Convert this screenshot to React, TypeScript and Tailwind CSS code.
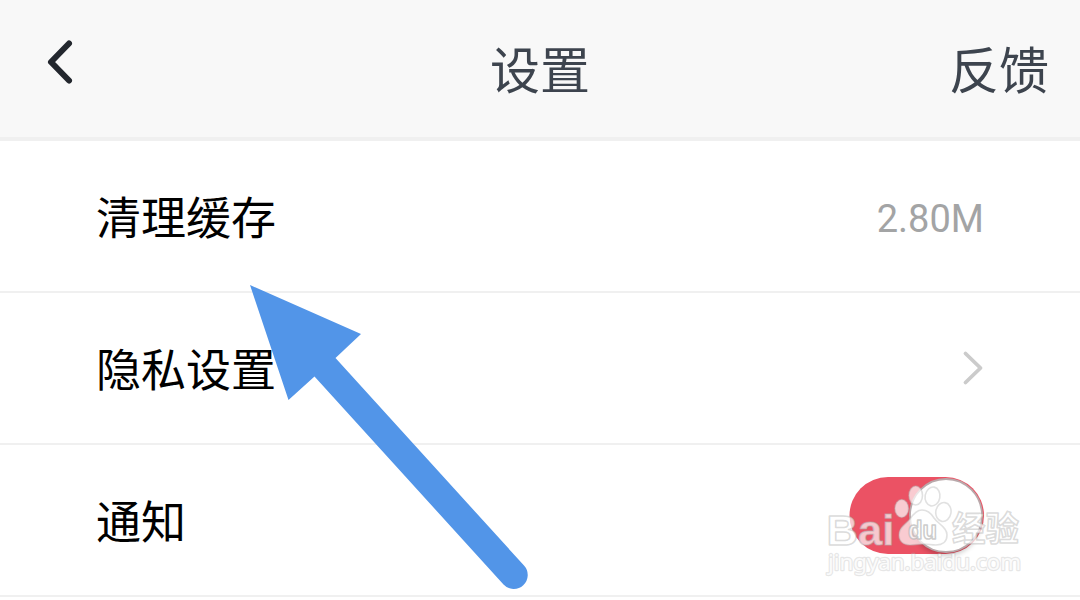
import type { ReactNode } from 'react';

function Row({ label, children }: { label: string; children: ReactNode }) {
  return (
    <div className="flex h-[152px] shrink-0 items-center justify-between border-b-2 border-[#f0f0f0] pr-24 pl-24">
      <span className="text-[45px] leading-[64px] text-black">{label}</span>
      {children}
    </div>
  );
}

function Toggle() {
  return (
    <svg className="mb-2 -mr-0.5 overflow-visible" width="140" height="84" viewBox="846 474 140 84">
      <defs>
        <filter id="knob-shadow" x="-20%" y="-20%" width="140%" height="150%">
          <feGaussianBlur stdDeviation="2.5" />
        </filter>
      </defs>
      <rect x="849.5" y="477" width="134.5" height="77" rx="38.5" fill="#eb5264" />
      <ellipse cx="946" cy="520" rx="35" ry="36" fill="#000" opacity="0.2" filter="url(#knob-shadow)" />
      <ellipse cx="946" cy="515.5" rx="36" ry="36.5" fill="#fff" stroke="#b9a9ab" strokeWidth="1.8" />
    </svg>
  );
}

function Watermark() {
  return (
    <svg
      className="pointer-events-none absolute top-[465px] left-[820px]"
      width="210"
      height="120"
      viewBox="820 465 210 120"
    >
      <g fill="#fff" fillOpacity="0.7" stroke="#b4b4b4" strokeOpacity="0.4" strokeWidth="1.6">
        <ellipse cx="901.7" cy="508.5" rx="6.8" ry="9" />
        <ellipse cx="915.7" cy="495.5" rx="6.8" ry="9.5" />
        <ellipse cx="932.5" cy="496.500" rx="7.4" ry="9.5" transform="rotate(10 932.5 496.5)" />
        <ellipse cx="943.4" cy="512" rx="7.6" ry="9.5" transform="rotate(10 943.4 512)" />
        <path d="M922 510c5 0 9 3 12 8 4 6 13 9 13 17 0 7-5 10-11 10-5 0-8-1-13-1s-8 1-13 1c-7 0-11-4-11-10 0-8 7-11 11-16 4-6 7-9 12-9Z" />
      </g>
      <g
        fill="#fff"
        fillOpacity="0.7"
        stroke="#b0b0b0"
        strokeOpacity="0.45"
        strokeWidth="1.6"
        strokeLinejoin="round"
      >
        <text x="826.5" y="544.5" textLength="68" lengthAdjust="spacingAndGlyphs" className="font-['Liberation_Sans',sans-serif] text-[43px] font-bold">
          Bai
        </text>
        <text x="952" y="541" textLength="67" lengthAdjust="spacingAndGlyphs" className="font-['Noto_Sans_CJK_SC',sans-serif] text-[34px] font-bold">
          经验
        </text>
        <text x="908" y="539" textLength="29" lengthAdjust="spacingAndGlyphs" strokeOpacity="0.65" className="font-['Liberation_Sans',sans-serif] text-[25px] font-bold">
          du
        </text>
      </g>
      <text
        x="828"
        y="570"
        textLength="193"
        lengthAdjust="spacingAndGlyphs"
        fill="#fff"
        fillOpacity="0.85"
        stroke="#b8b8b8"
        strokeOpacity="0.35"
        strokeWidth="2.4"
        strokeLinejoin="round"
        paintOrder="stroke"
        className="font-['Noto_Sans',sans-serif] text-[22px]"
      >
        jingyan.baidu.com
      </text>
    </svg>
  );
}

export default function App() {
  return (
    <div className="relative flex h-[600px] w-[1080px] flex-col overflow-hidden bg-white font-['Noto_Sans_CJK_SC',sans-serif]">
      <header className="grid h-[141px] shrink-0 grid-cols-3 items-center border-b-4 border-[#f0f0f0] bg-[#f8f8f8] pr-[31px] pb-[1px] pl-[31px] text-[50px] leading-[72px] text-[#3d444e]">
        <svg className="mb-3 ml-[13px]" width="32" height="48" viewBox="44 38 32 48" fill="none">
          <path d="M69 43.5 51 62 69 80.5" stroke="#23272e" strokeWidth="6" strokeLinecap="round" strokeLinejoin="round" />
        </svg>
        <h1 className="pb-0.5 text-center">设置</h1>
        <span className="pb-0.5 text-right">反馈</span>
      </header>
      <main className="flex flex-col">
        <Row label="清理缓存">
          <span className="pt-1.5 font-[Roboto,sans-serif] text-[38px] text-[#a3a4a5]">2.80M</span>
        </Row>
        <Row label="隐私设置">
          <svg className="-mr-px" width="24" height="38" viewBox="961 349 24 38" fill="none">
            <path d="M965.5 353.5 980.5 368 965.5 382.5" stroke="#cbcbcb" strokeWidth="3.8" strokeLinecap="round" strokeLinejoin="round" />
          </svg>
        </Row>
        <Row label="通知">
          <Toggle />
        </Row>
      </main>
      <svg className="pointer-events-none absolute top-0 left-0" width="1080" height="600" viewBox="0 0 1080 600">
        <path d="M250 285 361 334 335.5 358 524 565.5A13.8 13.8 0 0 1 503.500 584.500L314.5 376.500 288.500 400Z" fill="#5295e8" />
      </svg>
      <Watermark />
    </div>
  );
}
